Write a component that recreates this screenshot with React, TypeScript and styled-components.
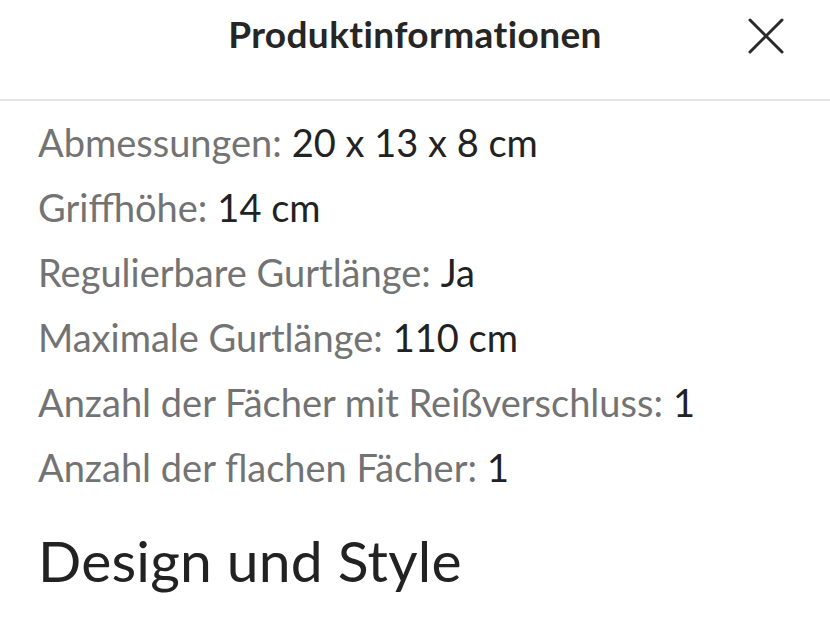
import React from "react";
import styled, { createGlobalStyle } from "styled-components";

const Global = createGlobalStyle`
  html, body { margin: 0; padding: 0; background: #fff; }
  body { font-family: Lato, "Noto Sans", sans-serif; -webkit-font-smoothing: antialiased; }
`;

const Sheet = styled.div`
  width: 830px;
  height: 622px;
  overflow: hidden;
  background: #fff;
  display: flex;
  flex-direction: column;
`;

const Header = styled.header`
  height: 99px;
  flex-shrink: 0;
  border-bottom: 2px solid #e4e4e4;
  display: grid;
  grid-template-columns: 1fr auto 1fr;
  align-items: start;
`;

const Title = styled.h1`
  grid-column: 2;
  margin: 12px 0 0;
  font-size: 37px;
  line-height: 44px;
  font-weight: 700;
  color: #262626;
  letter-spacing: 0.4px;
`;

const CloseButton = styled.button`
  grid-column: 3;
  justify-self: end;
  margin: 16px 44px 0 0;
  padding: 0;
  width: 40px;
  height: 40px;
  border: 0;
  background: none;
  display: flex;
  align-items: center;
  justify-content: center;
`;

const Body = styled.main`
  padding: 8px 38px 0;
  display: flex;
  flex-direction: column;
`;

const SpecList = styled.dl`
  margin: 0;
  display: flex;
  flex-direction: column;
`;

const Spec = styled.div`
  height: 65px;
  display: flex;
  align-items: center;
  font-size: 38px;
  white-space: nowrap;
`;

const Label = styled.dt`
  color: #737373;
  margin-right: 10px;
`;

const Value = styled.dd`
  margin: 0;
  color: #222;
`;

const Section = styled.h2`
  margin: 29px 0 0;
  font-size: 57px;
  line-height: 64px;
  font-weight: 400;
  color: #222;
  letter-spacing: 0.2px;
`;

const specs: [string, string][] = [
  ["Abmessungen:", "20 x 13 x 8 cm"],
  ["Griffhöhe:", "14 cm"],
  ["Regulierbare Gurtlänge:", "Ja"],
  ["Maximale Gurtlänge:", "110 cm"],
  ["Anzahl der Fächer mit Reißverschluss:", "1"],
  ["Anzahl der flachen Fächer:", "1"],
];

export default function App() {
  return (
    <>
      <Global />
      <Sheet>
        <Header>
          <Title>Produktinformationen</Title>
          <CloseButton aria-label="Schließen">
            <svg width="36" height="36" viewBox="0 0 36 36">
              <path d="M2 2 L34 34 M34 2 L2 34" stroke="#2a2a2a" strokeWidth="3" strokeLinecap="round" />
            </svg>
          </CloseButton>
        </Header>
        <Body>
          <SpecList>
            {specs.map(([k, v]) => (
              <Spec key={k}>
                <Label>{k}</Label>
                <Value>{v}</Value>
              </Spec>
            ))}
          </SpecList>
          <Section>Design und Style</Section>
        </Body>
      </Sheet>
    </>
  );
}
